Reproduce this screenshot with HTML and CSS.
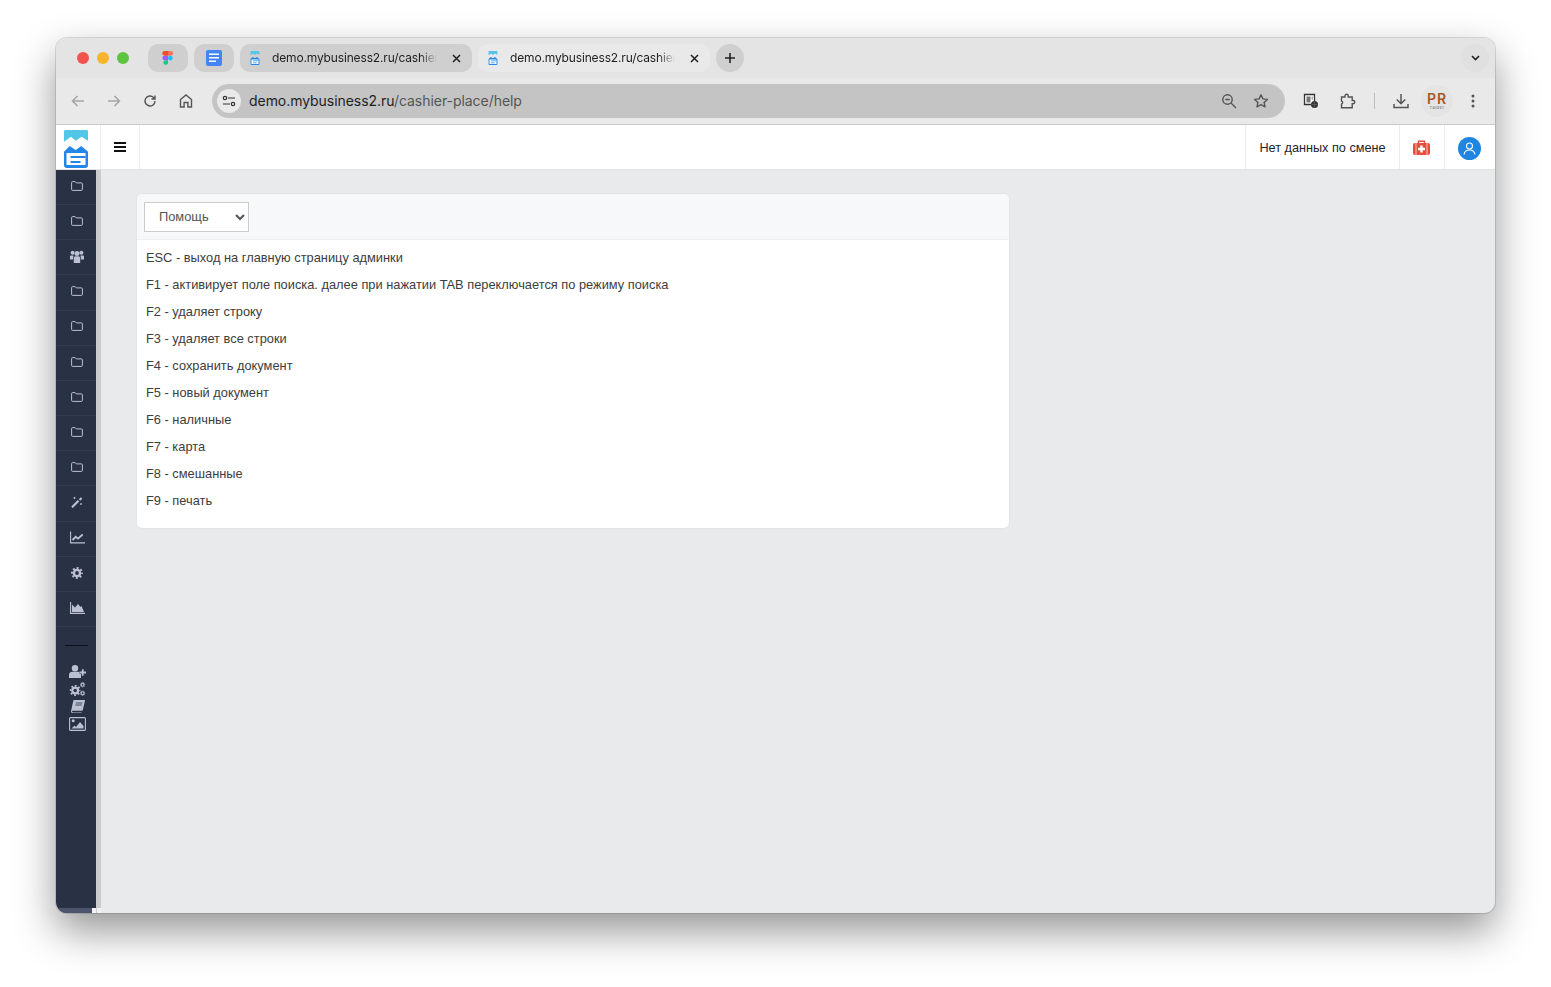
FILE: index.html
```html
<!DOCTYPE html>
<html lang="ru">
<head>
<meta charset="utf-8">
<title>demo.mybusiness2.ru</title>
<link rel="stylesheet" href="styles.css">
</head>
<body>
<svg class="defs" width="0" height="0" aria-hidden="true">
  <symbol id="folder" viewBox="0 0 12 10"><path d="M1.6.6h2.600l1.100 1.300h5.100a1 1 0 0 1 1 1v5.500a1 1 0 0 1-1 1H1.600a1 1 0 0 1-1-1V1.600a1 1 0 0 1 1-1z" fill="none" stroke="currentColor" stroke-width="1"/></symbol>
  <symbol id="favicon" viewBox="0 0 24 38"><path d="M1.500 0h21A1.500 1.500 0 0 1 24 1.500v9.200l-6.500-4-5.800 4L7 6.700 0 11.700V1.500A1.500 1.500 0 0 1 1.500 0z" fill="#52c6e6"/><path d="M0 21.700L5.700 16l6 4 5.600-4L24 21.700V35a3 3 0 0 1-3 3H3a3 3 0 0 1-3-3z" fill="#2287e6"/><path d="M2.500 23h19v12h-19z" fill="#fff"/><path d="M6.500 26h15v2h-15zM6.500 31h10v2h-10z" fill="#2287e6"/></symbol>
  <symbol id="gear" viewBox="0 0 12 12"><circle cx="6" cy="6" r="3.100" fill="none" stroke="currentColor" stroke-width="2.400"/><circle cx="6" cy="6" r="5" fill="none" stroke="currentColor" stroke-width="2" stroke-dasharray="1.960 1.967" stroke-dashoffset=".98"/></symbol>
</svg>
<div class="window">
  <div class="tabstrip">
    <div class="lights"><i class="light red"></i><i class="light yellow"></i><i class="light green"></i></div>
    <div class="pin">
      <svg width="12" height="15" viewBox="0 0 12 16"><path d="M2.500 0H6v5H2.500a2.500 2.500 0 0 1 0-5z" fill="#f24e1e"/><path d="M6 0h3a2.500 2.500 0 0 1 0 5H6z" fill="#ff7262"/><path d="M2.500 5H6v5H2.500a2.500 2.500 0 0 1 0-5z" fill="#a259ff"/><circle cx="8.500" cy="7.500" r="2.500" fill="#1abcfe"/><path d="M2.500 10H6v3a2.500 2.500 0 1 1-3.500-3z" fill="#0acf83"/></svg>
    </div>
    <div class="pin">
      <svg width="16" height="16" viewBox="0 0 16 16"><rect width="16" height="16" rx="2" fill="#4285f4"/><path d="M3 3.500h10v1.500H3zM3 7h10v1.500H3zM3 10.500h7V12H3z" fill="#fff"/></svg>
    </div>
    <div class="tab">
      <svg class="tab-icon" width="10" height="14"><use href="#favicon"/></svg>
      <span class="tab-title">demo.mybusiness2.ru/cashier</span>
      <svg class="tab-close" width="9" height="9" viewBox="0 0 9 9"><path d="M1 1l7 7M8 1L1 8" stroke="#1f1f1f" stroke-width="1.500"/></svg>
    </div>
    <div class="tab active">
      <svg class="tab-icon" width="10" height="14"><use href="#favicon"/></svg>
      <span class="tab-title">demo.mybusiness2.ru/cashier</span>
      <svg class="tab-close" width="9" height="9" viewBox="0 0 9 9"><path d="M1 1l7 7M8 1L1 8" stroke="#1f1f1f" stroke-width="1.500"/></svg>
    </div>
    <div class="new-tab">
      <svg width="10" height="10" viewBox="0 0 10 10"><path d="M5 0v10M0 5h10" stroke="#222" stroke-width="1.600"/></svg>
    </div>
    <div class="tab-menu">
      <svg width="9" height="6" viewBox="0 0 9 6"><path d="M1 1l3.500 3.500L8 1" fill="none" stroke="#1f1f1f" stroke-width="1.600"/></svg>
    </div>
  </div>

  <div class="toolbar">
    <div class="nav-icons">
      <svg width="16" height="16" viewBox="0 0 16 16"><path d="M14 8H2.500M7.500 3L2.500 8l5 5" fill="none" stroke="#a5a5a5" stroke-width="1.500"/></svg>
      <svg width="16" height="16" viewBox="0 0 16 16"><path d="M2 8h11.500M8.500 3l5 5-5 5" fill="none" stroke="#a5a5a5" stroke-width="1.500"/></svg>
      <svg width="16" height="16" viewBox="0 0 16 16"><path d="M13 8a5 5 0 1 1-1.500-3.600L13 6M13 2.500V6H9.500" fill="none" stroke="#555" stroke-width="1.400"/></svg>
      <svg width="16" height="16" viewBox="0 0 16 16"><path d="M2.500 14V6.500L8 2l5.500 4.500V14h-3.600V9.500H6.100V14z" fill="none" stroke="#555" stroke-width="1.400"/></svg>
    </div>
    <div class="omnibox">
      <div class="site-info">
        <svg width="14" height="12" viewBox="0 0 14 12"><circle cx="3" cy="3" r="1.700" fill="none" stroke="#333" stroke-width="1.200"/><path d="M6 3h7M1 9h7" stroke="#333" stroke-width="1.200"/><circle cx="11" cy="9" r="1.700" fill="none" stroke="#333" stroke-width="1.200"/></svg>
      </div>
      <div class="url">demo.mybusiness2.ru<span class="url-path">/cashier-place/help</span></div>
      <svg class="omni-zoom" width="16" height="16" viewBox="0 0 16 16"><circle cx="6.500" cy="6.500" r="4.700" fill="none" stroke="#555" stroke-width="1.400"/><path d="M10 10l5 5M4.300 6.500h4.400" stroke="#555" stroke-width="1.400"/></svg>
      <svg class="omni-star" width="16" height="16" viewBox="0 0 16 16"><path d="M8 1.800l1.900 4.100 4.500.5-3.300 3 .9 4.400L8 11.600l-4 2.200.9-4.400-3.300-3 4.500-.5z" fill="none" stroke="#555" stroke-width="1.400" stroke-linejoin="round"/></svg>
    </div>
    <div class="tool-icons">
      <svg class="t-note" width="16" height="16" viewBox="0 0 16 16"><path d="M1.500 1.500h10v10h-10z" fill="#fff" stroke="#333" stroke-width="1.300"/><path d="M3.500 3.500h4v6h-4z" fill="#777"/><path d="M8.500 3.500h1.500v3h-1.500z" fill="#aaa"/><circle cx="11.500" cy="11.500" r="3.500" fill="#333"/><path d="M8.500 11.500h6M11.500 8.500v6" stroke="#777" stroke-width=".5"/></svg>
      <svg class="t-ext" width="17" height="16" viewBox="0 0 17 16"><path d="M2.500 4H6V2.800a1.600 1.600 0 0 1 3.200 0V4h4v3.500h1a1.600 1.600 0 0 1 0 3.200h-1v4H2.500v-3.500a1.700 1.700 0 0 0 0-3.200z" fill="none" stroke="#555" stroke-width="1.400"/></svg>
      <i class="t-sep"></i>
      <svg class="t-dl" width="16" height="16" viewBox="0 0 16 16"><path d="M8 1v9.500M3.800 6.500L8 10.700l4.200-4.200M1 11v3.500h14V11" fill="none" stroke="#555" stroke-width="1.500"/></svg>
      <div class="t-profile"><span class="pr-main">PR</span><span class="pr-sub">Talder</span></div>
      <svg class="t-more" width="4" height="14" viewBox="0 0 4 14"><circle cx="2" cy="2" r="1.500" fill="#555"/><circle cx="2" cy="7" r="1.500" fill="#555"/><circle cx="2" cy="12" r="1.500" fill="#555"/></svg>
    </div>
  </div>

  <div class="app">
    <header class="topbar">
      <div class="brand"><svg width="24" height="38"><use href="#favicon"/></svg></div>
      <div class="burger"><i></i><i></i><i></i></div>
      <div class="top-spacer"></div>
      <div class="top-cell shift">Нет данных по смене</div>
      <div class="top-cell kit">
        <svg width="17" height="15" viewBox="0 0 17 15"><path d="M5.500 3V1.200h6V3" fill="none" stroke="#e84c3d" stroke-width="1.400"/><rect y="3" width="17" height="12" rx="2" fill="#e84c3d"/><path d="M3 3v12M14 3v12" stroke="#fff" stroke-width=".7"/><path d="M7.300 5.500h2.400v2.300H12v2.400H9.700v2.300H7.300v-2.300H5V7.800h2.300z" fill="#fff"/></svg>
      </div>
      <div class="top-cell user">
        <div class="avatar"><svg width="13" height="13" viewBox="0 0 13 13"><circle cx="6.500" cy="4" r="3" fill="none" stroke="#fff" stroke-width="1.100"/><path d="M1 12.500c.5-3 2.500-4.500 5.500-4.500s5 1.500 5.500 4.500" fill="none" stroke="#fff" stroke-width="1.100"/></svg></div>
      </div>
    </header>
    <div class="app-body">
      <nav class="sidebar">
        <a class="nav-item"><svg class="ico-folder"><use href="#folder"/></svg></a>
        <a class="nav-item"><svg class="ico-folder"><use href="#folder"/></svg></a>
        <a class="nav-item"><svg width="14" height="13" viewBox="0 0 14 13"><circle cx="2.600" cy="2.800" r="2" fill="currentColor"/><circle cx="11.400" cy="2.800" r="2" fill="currentColor"/><circle cx="7" cy="3.600" r="2.500" fill="currentColor"/><path d="M0 6.600a1 1 0 0 1 1-1h2.500L3 9.500H0zM14 6.600a1 1 0 0 0-1-1h-2.500l.5 3.900h3z" fill="currentColor"/><path d="M3.800 8a1.800 1.800 0 0 1 1.800-1.800h2.800A1.800 1.800 0 0 1 10.200 8v5H3.800z" fill="currentColor"/></svg></a>
        <a class="nav-item"><svg class="ico-folder"><use href="#folder"/></svg></a>
        <a class="nav-item"><svg class="ico-folder"><use href="#folder"/></svg></a>
        <a class="nav-item"><svg class="ico-folder"><use href="#folder"/></svg></a>
        <a class="nav-item"><svg class="ico-folder"><use href="#folder"/></svg></a>
        <a class="nav-item"><svg class="ico-folder"><use href="#folder"/></svg></a>
        <a class="nav-item"><svg class="ico-folder"><use href="#folder"/></svg></a>
        <a class="nav-item"><svg width="12" height="12" viewBox="0 0 12 12"><path d="M1 11.300L7.500 4.800" stroke="currentColor" stroke-width="2.200"/><path d="M7.800 3.300l2-2 1.500 1.500-2 2z" fill="currentColor"/><path d="M3.500 .8v2.400M2.300 2h2.400M10 7v2M9 8h2" stroke="currentColor" stroke-width=".8"/></svg></a>
        <a class="nav-item"><svg width="15" height="13" viewBox="0 0 15 12"><path d="M.6 0v11.400H15" fill="none" stroke="currentColor" stroke-width="1.100"/><path d="M2.500 8.500l3.200-3.200 2.300 1.800L12.700 3" fill="none" stroke="currentColor" stroke-width="1.800"/></svg></a>
        <a class="nav-item"><svg width="12" height="12"><use href="#gear"/></svg></a>
        <a class="nav-item"><svg width="15" height="12" viewBox="0 0 15 12"><path d="M.6 0v11.400H15" fill="none" stroke="currentColor" stroke-width="1.100"/><path d="M2 10V2.500l3 3 3-3.500 2.500 3 1-1 2.500 6z" fill="currentColor"/></svg></a>
        <div class="nav-rule"></div>
        <div class="nav-tools">
          <svg width="17" height="13" viewBox="0 0 17 13"><circle cx="6" cy="3.200" r="3.200" fill="currentColor"/><path d="M0 13V10c0-2 1.500-3.200 3.500-3.200h5c2 0 3.500 1.200 3.500 3.200v3z" fill="currentColor"/><path d="M10.500 7.500h6.500M13.750 4.300v6.400" stroke="#293145" stroke-width="3"/><path d="M10.500 7.500h6.500M13.750 4.300v6.400" stroke="currentColor" stroke-width="1.800"/></svg>
          <svg width="17" height="14" viewBox="0 0 17 15"><use href="#gear" x="0" y="3" width="12" height="12"/><use href="#gear" x="11" y="0" width="6" height="6"/><use href="#gear" x="11" y="9" width="6" height="6"/></svg>
          <svg width="14" height="13" viewBox="0 0 14 13"><path d="M3 0h10.500a.5.500 0 0 1 .5.600L11.800 10a1 1 0 0 1-1 .8H2.200c-.9 0-1.300.5-1.200.9s.5.700 1.200.7h8.500v.6H1.800C.6 13 0 12.200 0 11.200L2.300.7A1 1 0 0 1 3 0z" fill="currentColor"/><path d="M4.800 3h6.500M4.300 5h6.500" stroke="#293145" stroke-width=".8"/></svg>
          <svg width="17" height="14" viewBox="0 0 17 14"><rect x=".6" y=".6" width="15.800" height="12.800" rx="1" fill="none" stroke="currentColor" stroke-width="1.100"/><circle cx="4.200" cy="3.800" r="1.500" fill="currentColor"/><path d="M2.500 11.500l3-3 1.500 1.500 4-5 3.500 4v2.500z" fill="currentColor"/></svg>
        </div>
        <div class="sidebar-foot"></div>
      </nav>
      <div class="gutter"></div>
      <main class="content">
        <section class="card">
          <div class="card-head">
            <select class="help-select"><option>Помощь</option></select>
          </div>
          <div class="card-body">
            <p>ESC - выход на главную страницу админки</p>
            <p>F1 - активирует поле поиска. далее при нажатии TAB переключается по режиму поиска</p>
            <p>F2 - удаляет строку</p>
            <p>F3 - удаляет все строки</p>
            <p>F4 - сохранить документ</p>
            <p>F5 - новый документ</p>
            <p>F6 - наличные</p>
            <p>F7 - карта</p>
            <p>F8 - смешанные</p>
            <p>F9 - печать</p>
          </div>
        </section>
      </main>
    </div>
  </div>
</div>
</body>
</html>
```

FILE: styles.css
```css
* { box-sizing: border-box; }
html, body { margin: 0; height: 100%; }
body {
  background: #fff;
  padding: 38px 56px 74px;
  overflow: hidden;
  font-family: "Liberation Sans", Arial, sans-serif;
}
.defs { position: absolute; }
.window {
  width: 1439px;
  height: 875px;
  border-radius: 11px;
  overflow: hidden;
  display: flex;
  flex-direction: column;
  background: #e9eaec;
  box-shadow: 0 0 0 1px rgba(0,0,0,.12), 0 18px 42px rgba(0,0,0,.42);
}

/* browser tabs */
.tabstrip {
  height: 40px;
  flex: none;
  background: #e4e4e4;
  display: flex;
  align-items: flex-start;
  padding-top: 6px;
  font-family: Inter, "Liberation Sans", sans-serif;
}
.lights { display: flex; gap: 8px; padding: 8px 0 0 21px; width: 92px; }
.light { width: 12px; height: 12px; border-radius: 50%; display: block; }
.red { background: #f0544c; }
.yellow { background: #f7b52d; }
.green { background: #5dc340; }
.pin {
  width: 40px; height: 28px; margin-right: 6px;
  background: #cfcfcf; border-radius: 10px;
  display: flex; align-items: center; justify-content: center;
}
.tab {
  width: 232px; height: 28px; margin-right: 6px;
  background: #cfcfcf; border-radius: 10px;
  display: flex; align-items: center;
  padding: 0 11px 0 10px;
}
.tab.active { background: #e9e9e9; }
.tab-icon { flex: none; }
.tab-title {
  flex: 1; margin-left: 12px; min-width: 0;
  font-size: 12px; line-height: 16px; color: #1f1f1f;
  letter-spacing: -.15px;
  white-space: nowrap; overflow: hidden;
  -webkit-mask-image: linear-gradient(to left, transparent 3px, #000 20px);
  mask-image: linear-gradient(to left, transparent 3px, #000 20px);
}
.tab-close { flex: none; margin-left: 12px; }
.new-tab {
  width: 28px; height: 28px; border-radius: 50%;
  background: #cfcfcf;
  display: flex; align-items: center; justify-content: center;
}
.tab-menu {
  margin-left: auto; margin-right: 6px;
  width: 28px; height: 28px; border-radius: 50%;
  background: #e0e0e0;
  display: flex; align-items: center; justify-content: center;
}

/* browser toolbar */
.toolbar {
  height: 47px;
  flex: none;
  background: #e9e9e9;
  border-bottom: 1px solid #c9c9c9;
  display: flex;
  align-items: center;
  padding: 0 15px 0 14px;
  font-family: Inter, "Liberation Sans", sans-serif;
}
.nav-icons { display: flex; gap: 20px; width: 142px; flex: none; }
.omnibox {
  width: 1073px; height: 34px; flex: none;
  background: #c4c4c4; border-radius: 17px;
  display: flex; align-items: center;
  padding: 0 16px 0 5px;
}
.site-info {
  width: 24px; height: 24px; border-radius: 50%;
  background: #e9e9e9; flex: none;
  display: flex; align-items: center; justify-content: center;
}
.url { flex: 1; margin-left: 8px; font-size: 14px; line-height: 18px; color: #1f1f1f; letter-spacing: -.05px; }
.url-path { color: #555; }
.omni-zoom { margin-right: 16px; flex: none; }
.omni-star { flex: none; }
.tool-icons { flex: 1; display: flex; align-items: center; padding-left: 18px; }
.t-note { margin-right: 20px; }
.t-ext { margin-right: 18px; }
.t-sep { width: 1px; height: 16px; background: #bdbdbd; display: block; margin-right: 18px; }
.t-dl { margin-right: 12px; }
.t-profile {
  width: 32px; height: 32px; border-radius: 50%;
  background: #e4e4e4; margin-right: 18px;
  display: flex; flex-direction: column; align-items: center; justify-content: center;
  color: #a8581c;
}
.pr-main { font-size: 14px; line-height: 13px; font-weight: 600; letter-spacing: 1px; font-family: Inter, sans-serif; }
.pr-sub { font-size: 4px; line-height: 5px; letter-spacing: .5px; color: #666; }

/* application */
.app { flex: 1; min-height: 0; display: flex; flex-direction: column; }
.topbar {
  height: 45px; flex: none;
  background: #fff;
  border-bottom: 1px solid #e2e3e5;
  display: flex; align-items: stretch;
}
.brand {
  width: 45px; flex: none;
  border-right: 1px solid #ececec;
  display: flex; justify-content: center; padding: 5px 5px 0 0;
}
.burger {
  width: 39px; flex: none;
  border-right: 1px solid #ececec;
  display: flex; flex-direction: column; align-items: center; justify-content: center; gap: 2px;
}
.burger i { display: block; width: 12px; height: 2px; background: #111; }
.top-spacer { flex: 1; }
.top-cell {
  border-left: 1px solid #ececec;
  display: flex; align-items: center; justify-content: center;
}
.shift { width: 154px; font-size: 12.7px; color: #212529; padding-top: 2px; }
.kit { width: 45px; padding-right: 2px; }
.user { width: 51px; padding: 2px 1px 0 0; }
.avatar {
  width: 23px; height: 23px; border-radius: 50%;
  background: #2085e0;
  display: flex; align-items: center; justify-content: center;
}
.app-body { flex: 1; min-height: 0; display: flex; }
.sidebar {
  width: 40px; flex: none;
  background: #293145; color: #bcc1d1;
  display: flex; flex-direction: column;
  position: relative;
}
.nav-item {
  height: 35.17px; flex: none;
  display: flex; align-items: center; justify-content: center;
  border-bottom: 1px solid #333b50;
  padding: 0 0 2.6px 2px;
}
.ico-folder { width: 12px; height: 10px; }
.nav-rule { height: 1px; background: #0d1017; width: 23px; margin: 18px 0 0 9px; flex: none; }
.nav-tools {
  display: flex; flex-direction: column; align-items: center;
  gap: 4px; margin-top: 19px; padding-left: 3px;
}
.sidebar-foot {
  position: absolute; left: 0; right: 0; bottom: 0; height: 5px;
  background: #4d556d;
}
.sidebar-foot::after {
  content: ""; position: absolute; right: 0; top: 0; width: 4px; height: 5px;
  background: #f2f2f2;
}
.gutter { width: 5px; flex: none; background: #ccc; position: relative; }
.gutter::after {
  content: ""; position: absolute; right: 0; bottom: 0; width: 4px; height: 5px;
  background: #f2f2f2;
}
.content { flex: 1; min-width: 0; padding: 24px 0 0 36px; }
.card {
  width: 872px; height: 334px;
  background: #fff; border-radius: 5px;
  box-shadow: 0 0 2px rgba(0,0,0,.08);
  overflow: hidden;
}
.card-head {
  height: 46px; background: #f7f8fa;
  border-bottom: 1px solid #eeeff1;
  padding: 8px 7px;
}
.help-select {
  width: 105px; height: 30px;
  background: #fff;
  border: 1px solid #ccc;
  border-radius: 0;
  color: #555;
  font: 12.85px "Liberation Sans", Arial, sans-serif;
  padding: 0 0 2px 10px;
}
.card-body { padding: 10px 9px; }
.card-body p {
  margin: 0; height: 27px;
  font-size: 12.84px; line-height: 16px; color: #3d3d3d;
}
```
